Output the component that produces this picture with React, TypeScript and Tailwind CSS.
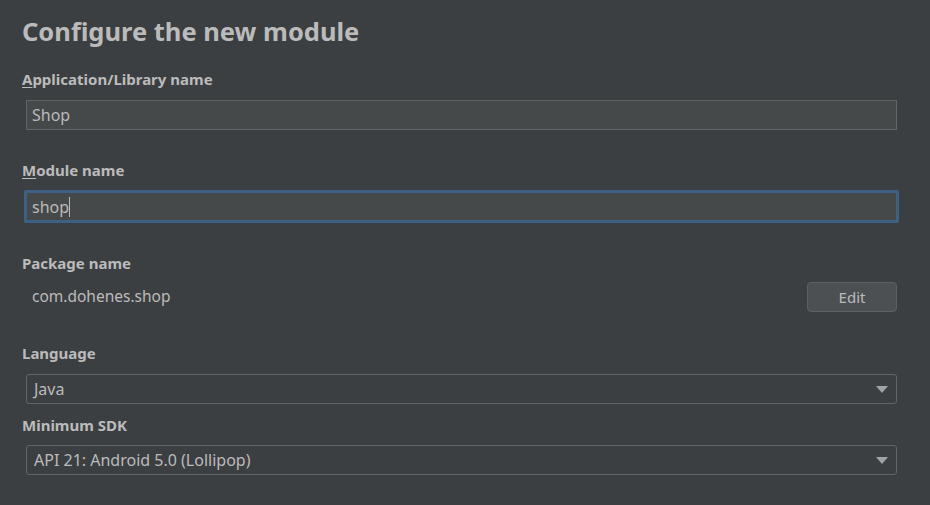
import React from 'react';

const font = { fontFamily: '"Noto Sans", "Open Sans", "Liberation Sans", sans-serif' };

const Label: React.FC<{ text: string; mnemonic?: boolean }> = ({ text, mnemonic }) => (
    <div className="text-[15px] font-bold text-[#bbbbbb] leading-5">
        {mnemonic ? (
            <>
                <span className="underline underline-offset-2">{text[0]}</span>
                {text.slice(1)}
            </>
        ) : (
            text
        )}
    </div>
);

const Caret = () => (
    <svg width="12" height="7" viewBox="0 0 12 7" className="shrink-0">
        <polygon points="0,0 12,0 6,7" fill="#a0a2a4" />
    </svg>
);

const Combo: React.FC<{ value: string }> = ({ value }) => (
    <div className="ml-[4px] mr-[33px] h-[30px] rounded-[3px] border border-[#646464] bg-[#3c3f41] flex items-center justify-between pl-[7px] pr-[8px]">
        <span className="text-[16px] text-[#bbbbbb]">{value}</span>
        <Caret />
    </div>
);

export default function App() {
    return (
        <div className="w-[930px] h-[505px] bg-[#3c3f41] overflow-hidden pl-[22px] pt-[13px]" style={font}>
            <h1 className="text-[25.5px] font-bold text-[#bbbbbb] leading-9">Configure the new module</h1>

            <div className="mt-[20px]">
                <Label text="Application/Library name" mnemonic />
            </div>
            <div className="mt-[11px] ml-[4px] mr-[33px] h-[30px] border border-[#646464] bg-[#45494a] flex items-center px-[5px]">
                <span className="text-[16px] text-[#bbbbbb]">Shop</span>
            </div>

            <div className="mt-[30px]">
                <Label text="Module name" mnemonic />
            </div>
            <div className="mt-[10px] ml-[2px] mr-[31px] h-[33px] rounded-[2px] border-[3px] border-[#3d6185] bg-[#45494a] flex items-center px-[5px]">
                <span className="text-[16px] text-[#bbbbbb]">shop</span>
                <span className="w-px h-[20px] bg-[#bbbbbb]" />
            </div>

            <div className="mt-[30px]">
                <Label text="Package name" />
            </div>
            <div className="mt-[9px] mr-[33px] flex items-center justify-between">
                <span className="ml-[10px] text-[15.5px] text-[#bbbbbb]">com.dohenes.shop</span>
                <button className="w-[90px] h-[30px] rounded-[4px] border border-[#5e6060] bg-[#4c5052] text-[15px] text-[#bbbbbb]">
                    Edit
                </button>
            </div>

            <div className="mt-[31px]">
                <Label text="Language" />
            </div>
            <div className="mt-[11px]">
                <Combo value="Java" />
            </div>

            <div className="mt-[11px]">
                <Label text="Minimum SDK" />
            </div>
            <div className="mt-[10px]">
                <Combo value="API 21: Android 5.0 (Lollipop)" />
            </div>
        </div>
    );
}
